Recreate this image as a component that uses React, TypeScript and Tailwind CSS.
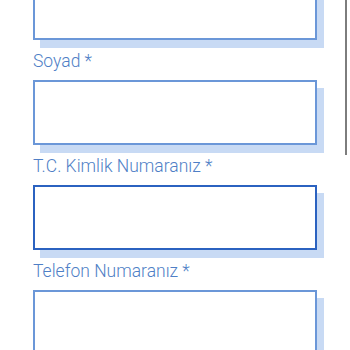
import React from "react";

const Field = ({ label, focused }: { label?: string; focused?: boolean }) => (
  <div>
    {label && (
      <div
        className="mt-[9px] mb-[7px] h-[24px] leading-[24px] text-[17.5px] font-light text-[#4f7fc6]"
        style={{ fontFamily: "Roboto, 'Open Sans', sans-serif" }}
      >
        {label}
      </div>
    )}
    <div
      className={
        "h-[65px] w-[284px] bg-white shadow-[7px_8px_0_0_#c8daf4] " +
        (focused ? "border-2 border-[#2b62c0]" : "border-2 border-[#6b97d8]")
      }
    />
  </div>
);

export default function App() {
  return (
    <div className="relative h-[350px] w-[350px] overflow-hidden bg-white">
      <div className="mt-[-25px] pl-[33px]">
        <Field />
        <Field label="Soyad *" />
        <Field label="T.C. Kimlik Numaranız *" focused />
        <Field label="Telefon Numaranız *" />
      </div>
      <div className="absolute right-[3px] top-0 h-[155px] w-[2px] bg-[#7d7d7d]" />
    </div>
  );
}
